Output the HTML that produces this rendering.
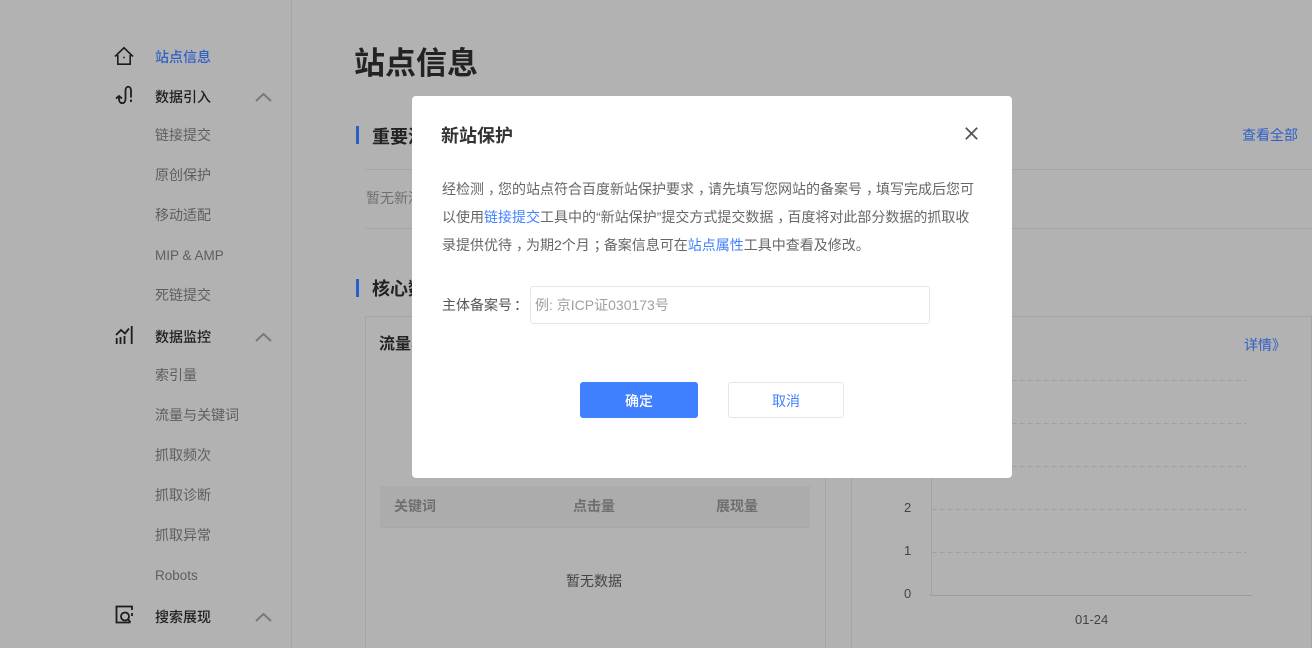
<!DOCTYPE html>
<html lang="zh-CN">
<head>
<meta charset="utf-8">
<title>站点信息</title>
<style>
html,body{margin:0;padding:0;width:1312px;height:648px;overflow:hidden;background:#b2b2b2}
body{position:relative;font-family:"Liberation Sans","Noto Sans CJK SC",sans-serif;font-size:14px;color:#333}
.t{position:absolute;white-space:nowrap;line-height:20px}
.n{left:155px;color:#5e5e5e}
.h{left:155px;color:#1f1f1f;font-weight:500}
.b{position:absolute;background:#a5a5a5}
svg{position:absolute;overflow:visible}
.lnk{color:#2f5fc8}
.sec{font-size:18px;font-weight:700;color:#232323;line-height:24px}
.th{font-weight:700;color:#6f6f6f}
.ax{color:#444;font-size:13px}
.c{position:relative;left:4px}
#modal{position:absolute;left:412px;top:96px;width:600px;height:382px;background:#fff;border-radius:4px}
#modal a{color:#4080ff;text-decoration:none}
#desc{position:absolute;left:30px;top:79px;line-height:28px;color:#666;white-space:nowrap;font-size:14px}
</style>
</head>
<body>
<!-- sidebar -->
<div class="b" style="left:291px;top:0;width:1px;height:648px"></div>

<svg style="left:114px;top:46px" width="20" height="20" viewBox="0 0 20 20" fill="none" stroke="#1c1c1c" stroke-width="1.6"><path d="M1 10.500 10 1.800l9 8.700"/><path d="M3.800 9v9.200h12.400V9"/><path d="M9.200 11.500h1.600"/></svg>
<svg style="left:114px;top:85px" width="20" height="20" viewBox="0 0 20 20" fill="none" stroke="#1c1c1c" stroke-width="1.8"><path d="M2 13.500 5 11l3 2.500"/><path d="M5 11.500v2.500c0 5.500 6.500 5.500 6.500 0V5.500c0-5 5.500-5 5.500 0v7"/><path d="M17 14.500v2.500"/></svg>
<svg style="left:114px;top:326px" width="20" height="20" viewBox="0 0 20 20" fill="none" stroke="#1c1c1c" stroke-width="1.800"><path d="M2 9 7 4l4 3.500 4-5"/><path d="M2.700 12v6M6.500 11v7M10.500 10v8M17.700 0v18"/></svg>
<svg style="left:114px;top:605px" width="20" height="20" viewBox="0 0 20 20" fill="none" stroke="#1c1c1c" stroke-width="1.800"><path d="M18 5V1.500H2.500v16h14"/><circle cx="11" cy="11.500" r="4"/><path d="M14 14.500l2.500 2.500"/><path d="M18 8v3"/></svg>

<svg style="left:255px;top:92px" width="17" height="10" fill="none" stroke="#787878" stroke-width="2"><path d="M1 9 8.500 2 16 9"/></svg>
<svg style="left:255px;top:332px" width="17" height="10" fill="none" stroke="#787878" stroke-width="2"><path d="M1 9 8.500 2 16 9"/></svg>
<svg style="left:255px;top:612px" width="17" height="10" fill="none" stroke="#787878" stroke-width="2"><path d="M1 9 8.500 2 16 9"/></svg>

<div class="t h" style="top:47px;color:#2f5fc8">站点信息</div>
<div class="t h" style="top:87px">数据引入</div>
<div class="t n" style="top:125px">链接提交</div>
<div class="t n" style="top:165px">原创保护</div>
<div class="t n" style="top:205px">移动适配</div>
<div class="t n" style="top:246px;font-size:13.500px">MIP &amp; AMP</div>
<div class="t n" style="top:285px">死链提交</div>
<div class="t h" style="top:327px">数据监控</div>
<div class="t n" style="top:365px">索引量</div>
<div class="t n" style="top:405px">流量与关键词</div>
<div class="t n" style="top:445px">抓取频次</div>
<div class="t n" style="top:485px">抓取诊断</div>
<div class="t n" style="top:525px">抓取异常</div>
<div class="t n" style="top:566px;font-size:13.500px">Robots</div>
<div class="t h" style="top:607px">搜索展现</div>

<!-- main -->
<div class="t" style="left:354px;top:44px;font-size:31px;font-weight:700;color:#232323;line-height:40px">站点信息</div>

<div class="b" style="left:356px;top:126px;width:3px;height:18px;background:#2d5fc8"></div>
<div class="t sec" style="left:372px;top:125px">重要消息</div>
<div class="t lnk" style="left:1242px;top:125px">查看全部</div>
<div class="b" style="left:365px;top:169px;width:947px;height:1px"></div>
<div class="t" style="left:366px;top:188px;color:#707070">暂无新消息</div>
<div class="b" style="left:365px;top:228px;width:947px;height:1px"></div>

<div class="b" style="left:356px;top:279px;width:3px;height:18px;background:#2d5fc8"></div>
<div class="t sec" style="left:372px;top:277px">核心数据</div>

<!-- left card -->
<div style="position:absolute;left:365px;top:316px;width:459px;height:340px;border:1px solid #a5a5a5"></div>
<div class="t" style="left:379px;top:334px;font-size:16px;font-weight:700;color:#232323;line-height:22px">流量与关键词</div>
<div style="position:absolute;left:380px;top:486px;width:430px;height:41px;background:#acacac;border-bottom:1px solid #a8a8a8"></div>
<div class="t th" style="left:394px;top:496px">关键词</div>
<div class="t th" style="left:573px;top:496px">点击量</div>
<div class="t th" style="left:716px;top:496px">展现量</div>
<div class="t" style="left:566px;top:571px;color:#444">暂无数据</div>

<!-- right card -->
<div style="position:absolute;left:851px;top:316px;width:459px;height:340px;border:1px solid #a5a5a5"></div>
<div class="t lnk" style="left:1244px;top:335px">详情》</div>
<svg style="left:0;top:0" width="1312" height="648" fill="none">
<g stroke="#a0a0a0" stroke-width="1" stroke-dasharray="5 3">
<path d="M932 380.500H1247M932 423.500H1247M932 466.500H1247M932 509.500H1247M932 552.500H1247"/>
</g>
<path d="M931.500 380V595" stroke="#a3a3a3"/>
<path d="M930 595.500H1252" stroke="#9c9c9c"/>
</svg>
<div class="t ax" style="left:904px;top:498px">2</div>
<div class="t ax" style="left:904px;top:541px">1</div>
<div class="t ax" style="left:904px;top:584px">0</div>
<div class="t ax" style="left:1075px;top:610px">01-24</div>

<!-- modal -->
<div id="modal">
  <div class="t" style="left:29px;top:27px;font-size:18px;font-weight:700;color:#333;line-height:26px">新站保护</div>
  <svg style="left:553px;top:31px" width="13" height="13" fill="none" stroke="#555" stroke-width="1.800"><path d="M.8.8l11.400 11.400M12.200.8.8 12.200"/></svg>
  <div id="desc">经检测<span class="c">，</span>您的站点符合百度新站保护要求<span class="c">，</span>请先填写您网站的备案号<span class="c">，</span>填写完成后您可<br>以使用<a>链接提交</a>工具中的“新站保护”提交方式提交数据<span class="c">，</span>百度将对此部分数据的抓取收<br>录提供优待<span class="c">，</span>为期2个月<span class="c">；</span>备案信息可在<a>站点属性</a>工具中查看及修改。</div>
  <div class="t" style="left:30px;top:199px;color:#555">主体备案号<span class="c" style="left:2px">：</span></div>
  <div style="position:absolute;left:118px;top:190px;width:398px;height:36px;border:1px solid #e6e6e6;border-radius:3px"></div>
  <div class="t" style="left:123px;top:199px;color:#a0a0a0">例: 京ICP证030173号</div>
  <div style="position:absolute;left:168px;top:286px;width:118px;height:36px;background:#4080ff;border-radius:3px;color:#fff;text-align:center;line-height:38px;font-weight:500">确定</div>
  <div style="position:absolute;left:316px;top:286px;width:114px;height:34px;border:1px solid #e6e6e6;border-radius:3px;color:#4080ff;text-align:center;line-height:36px">取消</div>
</div>
</body>
</html>
